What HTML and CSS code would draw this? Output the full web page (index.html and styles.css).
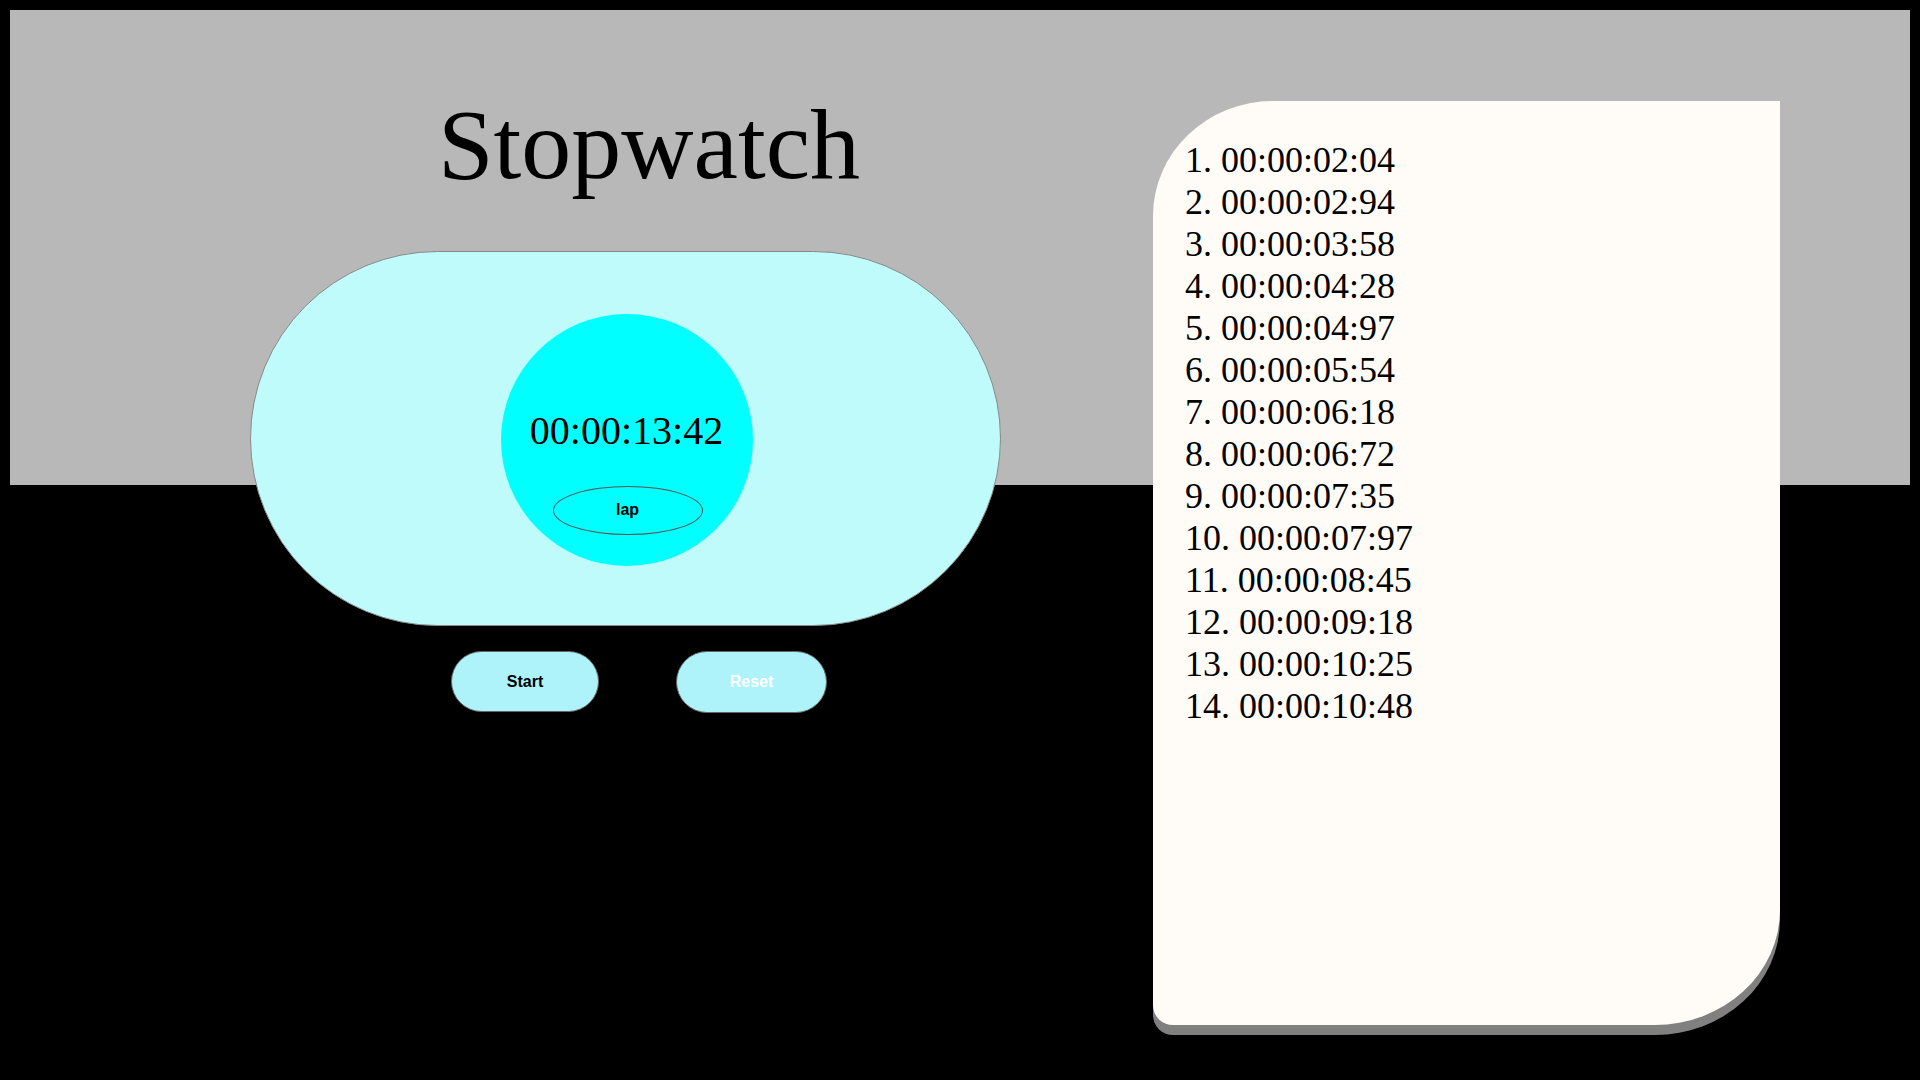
FILE: index.html
```html
<!DOCTYPE html>
<html lang="en">
<head>
<meta charset="utf-8">
<title>Stopwatch</title>
<link rel="stylesheet" href="styles.css">
</head>
<body>
<div class="page">
  <div class="left">
    <h1 class="title">Stopwatch</h1>
    <div class="pill">
      <div class="dial">
        <div class="time">00:00:13:42</div>
        <button class="lap">lap</button>
      </div>
    </div>
    <div class="controls">
      <button class="btn btn-start">Start</button>
      <button class="btn btn-reset">Reset</button>
    </div>
  </div>
  <div class="laps">
    <ol class="lap-list">
      <li>00:00:02:04</li>
      <li>00:00:02:94</li>
      <li>00:00:03:58</li>
      <li>00:00:04:28</li>
      <li>00:00:04:97</li>
      <li>00:00:05:54</li>
      <li>00:00:06:18</li>
      <li>00:00:06:72</li>
      <li>00:00:07:35</li>
      <li>00:00:07:97</li>
      <li>00:00:08:45</li>
      <li>00:00:09:18</li>
      <li>00:00:10:25</li>
      <li>00:00:10:48</li>
    </ol>
  </div>
</div>
</body>
</html>
```
FILE: styles.css
```css
html, body {
  margin: 0;
  padding: 0;
}
body {
  background: #000;
  padding: 10px;
  width: 1920px;
  height: 1080px;
  box-sizing: border-box;
  overflow: hidden;
  font-family: "Liberation Serif", "Times New Roman", serif;
}
.page {
  width: 1900px;
  height: 1060px;
  display: flex;
  align-items: flex-start;
  background: linear-gradient(to bottom, #b8b8b9 0, #b8b8b9 475px, transparent 475px);
}
.left {
  width: 751px;
  margin-left: 240px;
  padding-top: 77px;
  display: flex;
  flex-direction: column;
}
.title {
  margin: 0;
  font-weight: normal;
  font-size: 100px;
  line-height: 115px;
  text-align: center;
  padding-left: 47px;
  color: #000;
}
.pill {
  margin-top: 49px;
  width: 751px;
  height: 375px;
  box-sizing: border-box;
  border: 1px solid #888;
  border-radius: 200px;
  background: #befbfa;
  display: flex;
  justify-content: center;
  align-items: center;
}
.dial {
  width: 252px;
  height: 252px;
  border-radius: 50%;
  background: #00ffff;
  box-sizing: border-box;
  padding-top: 94px;
  display: flex;
  flex-direction: column;
  align-items: center;
  margin-left: 2px;
  margin-top: 2px;
}
.time {
  font-size: 40px;
  line-height: 46px;
  color: #000;
}
.lap {
  margin-top: 32px;
  margin-left: 2px;
  width: 150px;
  height: 49px;
  border: 1px solid #555;
  border-radius: 50%;
  background: transparent;
  font-family: "Liberation Sans", Arial, sans-serif;
  font-weight: bold;
  font-size: 16px;
  color: #000;
  padding: 0;
}
.controls {
  display: flex;
  margin-top: 25px;
  margin-left: 201px;
  gap: 77px;
}
.btn {
  border: 1px solid #666;
  background: #aef3f9;
  border-radius: 31px;
  font-family: "Liberation Sans", Arial, sans-serif;
  font-weight: bold;
  font-size: 16px;
  padding: 0;
}
.btn-start {
  width: 148px;
  height: 61px;
  color: #000;
}
.btn-reset {
  width: 151px;
  height: 62px;
  color: #fff;
}
.laps {
  margin-left: 152px;
  margin-top: 91px;
  width: 627px;
  height: 924px;
  box-sizing: border-box;
  background: #fffcf7;
  border-radius: 120px 0 125px 20px / 115px 0 115px 20px;
  box-shadow: 0 10px 0 #808080;
  padding-top: 38px;
  padding-left: 32px;
}
.lap-list {
  margin: 0;
  padding: 0;
  list-style-position: inside;
  font-size: 36px;
  line-height: 42px;
  color: #000;
}
```
